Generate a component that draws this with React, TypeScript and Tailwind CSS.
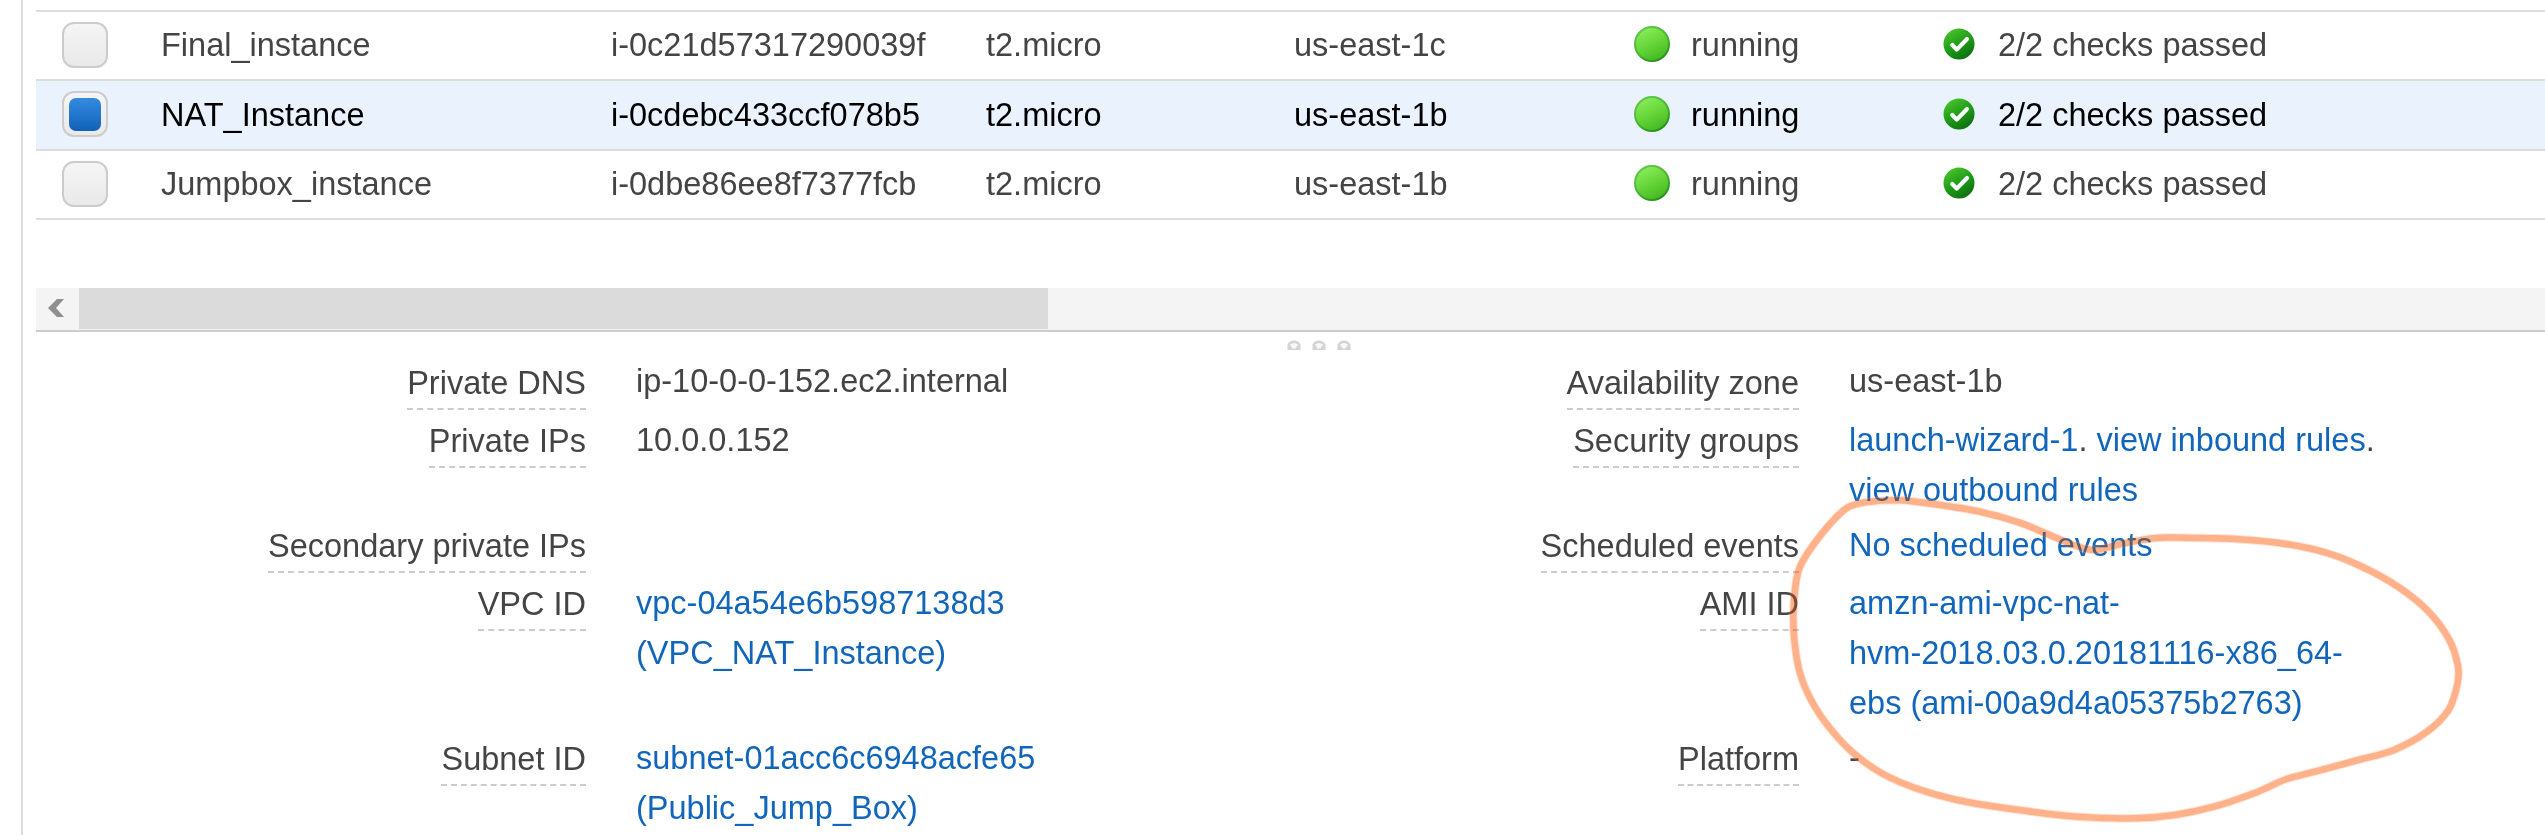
const ROWS = [
  { name: 'Final_instance', id: 'i-0c21d57317290039f', zone: 'us-east-1c', selected: false, h: 'h-[69px]', text: 'mt-[8px]' },
  { name: 'NAT_Instance', id: 'i-0cdebc433ccf078b5', zone: 'us-east-1b', selected: true, h: 'h-[70px]', text: 'mt-[9px]' },
  { name: 'Jumpbox_instance', id: 'i-0dbe86ee8f7377fcb', zone: 'us-east-1b', selected: false, h: 'h-[69px]', text: 'mt-[8px]' },
];

// Hand-drawn loop around the AMI ID value.
const LOOP: [number, number][] = [
  [1900, 500.3], [1870, 501.7], [1848, 507.3], [1830, 524], [1812, 546.7], [1800, 566.7], [1795.3, 586.7],
  [1793.3, 616.7], [1794.7, 643.3], [1800, 673.3], [1812, 701.7], [1830, 728.3], [1853, 752.7], [1883, 774],
  [1923, 790.7], [1967, 802], [2027, 811], [2077, 816.7], [2135, 818.3], [2174.6, 815], [2214, 806.7],
  [2254, 793.3], [2286, 779.3], [2315, 771.7], [2358, 760], [2394, 750], [2427, 731.7], [2448.5, 710],
  [2457.5, 683.3], [2457.8, 665], [2448.5, 638.3], [2427, 610], [2398, 586.7], [2362, 566.7], [2326, 552.7],
  [2286, 544], [2239.5, 539.3], [2196, 538], [2156.6, 538], [2124, 543.3], [2095, 550], [2073.7, 545],
  [2052, 536], [2019.6, 522.7], [1980, 511.7], [1933, 504],
];

function smoothClosed(p: [number, number][]) {
  const n = p.length;
  let d = `M${p[0][0]} ${p[0][1]}`;
  for (let i = 0; i < n; i++) {
    const a = p[(i - 1 + n) % n];
    const b = p[i];
    const c = p[(i + 1) % n];
    const e = p[(i + 2) % n];
    d += `C${b[0] + (c[0] - a[0]) / 6} ${b[1] + (c[1] - a[1]) / 6} ${c[0] - (e[0] - b[0]) / 6} ${c[1] - (e[1] - b[1]) / 6} ${c[0]} ${c[1]}`;
  }
  return d + 'Z';
}

const LOOP_PATH = smoothClosed(LOOP);

function RunningIcon() {
  return (
    <svg width="38" height="38" viewBox="0 0 38 38" className="-mt-[2px] shrink-0">
      <defs>
        <linearGradient id="run" x1="0.25" y1="0" x2="0.75" y2="1">
          <stop offset="0" stopColor="#8aee5c" />
          <stop offset="0.5" stopColor="#67d538" />
          <stop offset="1" stopColor="#3fb521" />
        </linearGradient>
        <linearGradient id="runEdge" x1="0.2" y1="0" x2="0.8" y2="1">
          <stop offset="0" stopColor="#62c94a" />
          <stop offset="0.6" stopColor="#45b02e" />
          <stop offset="1" stopColor="#1f8c1a" />
        </linearGradient>
      </defs>
      <circle cx="19" cy="19" r="17" fill="url(#run)" stroke="url(#runEdge)" strokeWidth="2" />
    </svg>
  );
}

function CheckIcon() {
  return (
    <svg width="34" height="34" viewBox="0 0 34 34" className="-mt-[2px] shrink-0">
      <defs>
        <linearGradient id="chk" x1="0.2" y1="0" x2="0.8" y2="1">
          <stop offset="0" stopColor="#4cc52c" />
          <stop offset="0.5" stopColor="#1f9c17" />
          <stop offset="1" stopColor="#0a6a10" />
        </linearGradient>
      </defs>
      <circle cx="17" cy="17" r="15.5" fill="url(#chk)" />
      <path d="M10.3 18L14.7 22.6L25 12" fill="none" stroke="#fff" strokeWidth="4.2" strokeLinecap="round" strokeLinejoin="round" />
    </svg>
  );
}

function Checkbox({ checked }: { checked: boolean }) {
  return (
    <div className="flex size-[46px] items-center justify-center rounded-[12px] border-2 border-[#ccc] bg-linear-to-b from-[#f5f5f5] to-[#e9e9e9]">
      {checked && <div className="h-[33px] w-8 rounded-[7px] bg-linear-to-b from-[#338be0] to-[#1062b8]" />}
    </div>
  );
}

function Label({ children }: { children: string }) {
  return (
    <div className="flex justify-end pt-[1px]">
      <span className="h-[52px] border-b-2 border-dashed border-[#ccc]">{children}</span>
    </div>
  );
}

const LINK = 'text-[#1166bb]';

export default function App() {
  return (
    <div className="relative flex h-[835px] w-[2545px] overflow-hidden bg-white font-['Liberation_Sans',Arial,sans-serif] text-[32.5px] leading-[50px] text-[#444]">
      <div className="w-[23px] shrink-0 border-r-2 border-[#ddd]" />
      <div className="flex flex-1 flex-col pl-[13px]">
        <div className="mt-[10px] shrink-0 border-t-2 border-[#ddd]">
          {ROWS.map((r) => (
            <div
              key={r.name}
              className={`grid grid-cols-[125px_450px_375px_308px_339px_309px_1fr] items-start border-b-2 border-[#ddd] ${r.h} ${r.selected ? 'bg-[#eaf2fe] text-black' : ''}`}
            >
              <div className="pt-[10px] pl-[26px]">
                <Checkbox checked={r.selected} />
              </div>
              <div className={r.text}>{r.name}</div>
              <div className={r.text}>{r.id}</div>
              <div className={r.text}>t2.micro</div>
              <div className={r.text}>{r.zone}</div>
              <div className={`flex items-center gap-[20px] ${r.text}`}>
                <RunningIcon />
                running
              </div>
              <div className={`flex items-center gap-[22px] ${r.text}`}>
                <CheckIcon />
                2/2 checks passed
              </div>
            </div>
          ))}
        </div>

        <div className="mt-[68px] flex h-[44px] shrink-0 border-b-2 border-[#ccc] bg-[#f4f4f4]">
          <div className="w-[43px] pt-[11px] pl-[12px]">
            <svg width="16" height="18" viewBox="0 0 16 18">
              <path d="M9 0H16L8 9L16 18H9L0 9Z" fill="#8f8f8f" />
            </svg>
          </div>
          <div className="h-[41px] w-[969px] bg-[#dbdbdb]" />
        </div>

        <div className="flex h-[25px] shrink-0 items-start gap-[11px] pt-[8px] pl-[1251px]">
          {[0, 1, 2].map((i) => (
            <svg key={i} width="14" height="10" viewBox="0 0 14 10">
              <path d="M0.500 10V4.500Q2.500 0.500 7 0.500T13.500 4.500V10Z" fill="#d4d4d4" />
              <path d="M3 4.500Q7 1.500 11 4.500L8.500 8.500H5.500Z" fill="#f8f8f8" />
            </svg>
          ))}
        </div>

        <div className="grid shrink-0 grid-cols-[550px_50px_613px_550px_50px_1fr] grid-rows-[58px_105px_58px_155px_105px] content-start">
          <Label>Private DNS</Label>
          <div />
          <div className="-mt-px">ip-10-0-0-152.ec2.internal</div>
          <Label>Availability zone</Label>
          <div />
          <div className="-mt-px">us-east-1b</div>

          <Label>Private IPs</Label>
          <div />
          <div>10.0.0.152</div>
          <Label>Security groups</Label>
          <div />
          <div>
            <span className={LINK}>launch-wizard-1</span>. <span className={LINK}>view inbound rules</span>.
            <br />
            <span className={LINK}>view outbound rules</span>
          </div>

          <Label>Secondary private IPs</Label>
          <div />
          <div />
          <Label>Scheduled events</Label>
          <div />
          <div className={LINK}>No scheduled events</div>

          <Label>VPC ID</Label>
          <div />
          <div className={LINK}>
            vpc-04a54e6b5987138d3
            <br />
            (VPC_NAT_Instance)
          </div>
          <Label>AMI ID</Label>
          <div />
          <div className={LINK}>
            amzn-ami-vpc-nat-
            <br />
            hvm-2018.03.0.20181116-x86_64-
            <br />
            ebs (ami-00a9d4a05375b2763)
          </div>

          <Label>Subnet ID</Label>
          <div />
          <div className={LINK}>
            subnet-01acc6c6948acfe65
            <br />
            (Public_Jump_Box)
          </div>
          <Label>Platform</Label>
          <div />
          <div>-</div>
        </div>
      </div>

      <svg className="pointer-events-none absolute top-0 left-0" width="2545" height="835" viewBox="0 0 2545 835">
        <path d={LOOP_PATH} fill="none" stroke="#ff9f70" strokeOpacity="0.3" strokeWidth="8.500" />
      </svg>
      <svg className="pointer-events-none absolute top-0 left-0 mix-blend-multiply" width="2545" height="835" viewBox="0 0 2545 835">
        <path d={LOOP_PATH} fill="none" stroke="#ffc8a6" strokeWidth="6.500" />
      </svg>
    </div>
  );
}
